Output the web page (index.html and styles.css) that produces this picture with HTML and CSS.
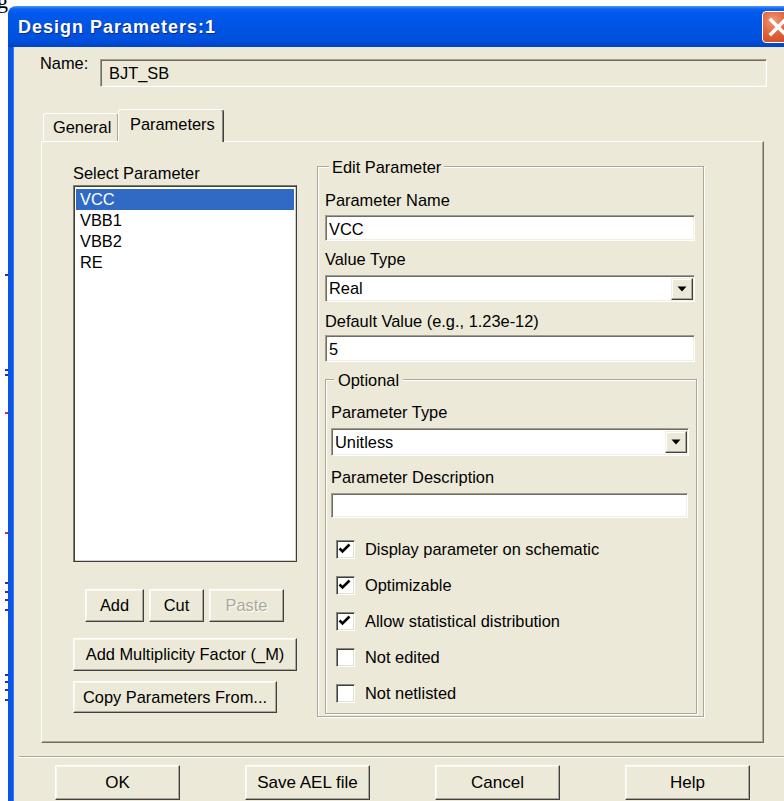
FILE: index.html
```html
<!DOCTYPE html>
<html lang="en">
<head>
<meta charset="utf-8">
<title>Design Parameters:1</title>
<link rel="stylesheet" href="styles.css">
</head>
<body>
<div class="desk">
  <span class="doc-glyph">g</span>
  <span class="doc-tick tick-a"></span>
  <span class="doc-tick tick-b"></span>
  <span class="doc-tick tick-c"></span>
  <span class="doc-tick tick-pink tick-d"></span>
  <span class="doc-tick tick-pink tick-e"></span>
  <span class="doc-tick tick-f"></span>
  <span class="doc-tick tick-g"></span>
  <span class="doc-tick tick-h"></span>
  <span class="doc-tick tick-i"></span>
  <span class="doc-tick tick-j"></span>
  <span class="doc-tick tick-k"></span>
  <span class="doc-tick tick-l"></span>
  <span class="doc-tick tick-m"></span>

  <div class="window">
    <div class="titlebar">
      <span class="title">Design Parameters:1</span>
      <button class="close" aria-label="Close">
        <svg width="30" height="30" viewBox="0 0 30 30"><path d="M8 8 L22 22 M22 8 L8 22" stroke="#fff" stroke-width="3.6" stroke-linecap="square" fill="none"/></svg>
      </button>
    </div>

    <div class="client">
      <div class="name-row">
        <span class="name-label">Name:</span>
        <div class="sunken name-field">BJT_SB</div>
      </div>

      <div class="tabs">
        <div class="tab">General</div>
        <div class="tab tab-active">Parameters</div>
      </div>

      <div class="tab-panel">
        <div class="list-col">
          <div class="select-label">Select Parameter</div>
          <ul class="listbox">
            <li class="selected">VCC</li>
            <li>VBB1</li>
            <li>VBB2</li>
            <li>RE</li>
          </ul>
          <div class="list-actions">
            <button class="btn btn-add">Add</button>
            <button class="btn btn-cut">Cut</button>
            <button class="btn btn-paste" disabled>Paste</button>
          </div>
          <button class="btn btn-mult">Add Multiplicity Factor (_M)</button>
          <button class="btn btn-copy">Copy Parameters From...</button>
        </div>

        <div class="group edit-group">
          <span class="legend">Edit Parameter</span>
          <div class="lbl lbl-name">Parameter Name</div>
          <div class="sunken field field-name">VCC</div>
          <div class="lbl lbl-type">Value Type</div>
          <div class="sunken combo combo-type">
            <span class="combo-text">Real</span>
            <span class="combo-arrow"><svg width="10" height="6" viewBox="0 0 10 6"><path d="M0.5 0.5 H9.5 L5 5.5 Z" fill="#000"/></svg></span>
          </div>
          <div class="lbl lbl-default">Default Value (e.g., 1.23e-12)</div>
          <div class="sunken field field-default">5</div>

          <div class="group optional-group">
            <span class="legend legend-opt">Optional</span>
            <div class="lbl lbl-ptype">Parameter Type</div>
            <div class="sunken combo combo-ptype">
              <span class="combo-text">Unitless</span>
              <span class="combo-arrow"><svg width="10" height="6" viewBox="0 0 10 6"><path d="M0.5 0.5 H9.5 L5 5.5 Z" fill="#000"/></svg></span>
            </div>
            <div class="lbl lbl-desc">Parameter Description</div>
            <div class="sunken field field-desc"></div>

            <ul class="checks">
              <li class="check-row"><span class="box"><svg width="17" height="17" viewBox="0 0 17 17"><path d="M2.5 7.5 L5.5 10.5 L12.5 3.5" stroke="#000" stroke-width="2.6" fill="none"/></svg></span><span class="check-text">Display parameter on schematic</span></li>
              <li class="check-row"><span class="box"><svg width="17" height="17" viewBox="0 0 17 17"><path d="M2.5 7.5 L5.5 10.5 L12.5 3.5" stroke="#000" stroke-width="2.6" fill="none"/></svg></span><span class="check-text">Optimizable</span></li>
              <li class="check-row"><span class="box"><svg width="17" height="17" viewBox="0 0 17 17"><path d="M2.5 7.5 L5.5 10.5 L12.5 3.5" stroke="#000" stroke-width="2.6" fill="none"/></svg></span><span class="check-text">Allow statistical distribution</span></li>
              <li class="check-row"><span class="box"></span><span class="check-text">Not edited</span></li>
              <li class="check-row"><span class="box"></span><span class="check-text">Not netlisted</span></li>
            </ul>
          </div>
        </div>
      </div>

      <div class="separator"></div>

      <div class="footer">
        <button class="btn btn-foot">OK</button>
        <button class="btn btn-foot">Save AEL file</button>
        <button class="btn btn-foot">Cancel</button>
        <button class="btn btn-foot">Help</button>
      </div>
    </div>
  </div>
</div>
</body>
</html>
```
FILE: styles.css
```css
* { box-sizing: border-box; }

html, body {
  margin: 0;
  width: 784px;
  height: 801px;
  overflow: hidden;
  background: #fff;
}

body {
  font-family: "Liberation Sans", Arial, sans-serif;
  font-size: 16.4px;
  line-height: 19px;
  color: #000;
}

.desk {
  position: relative;
  width: 784px;
  height: 801px;
}

/* bits of the document behind the dialog */
.doc-glyph {
  position: absolute;
  left: -3px;
  top: -16px;
  font-family: "Liberation Serif", serif;
  font-size: 22px;
  line-height: 22px;
}

.doc-tick {
  position: absolute;
  left: 5px;
  width: 3px;
  height: 2px;
  background: #1a2fd6;
}
.tick-pink { background: #d3207f; }
.tick-a { top: 268px; }
.tick-b { top: 363px; }
.tick-c { top: 368px; }
.tick-d { top: 406px; }
.tick-e { top: 526px; }
.tick-f { top: 576px; }
.tick-g { top: 585px; }
.tick-h { top: 593px; }
.tick-i { top: 603px; }
.tick-j { top: 668px; }
.tick-k { top: 675px; }
.tick-l { top: 683px; }
.tick-m { top: 693px; }

/* window frame */
.window {
  position: relative;
  z-index: 1;
  margin: 6px 0 0 8px;
  width: 800px;
}

.titlebar {
  display: flex;
  align-items: center;
  height: 41px;
  padding: 0 4px 0 10px;
  border-radius: 8px 8px 0 0;
  background: linear-gradient(#4a93ff 0, #0d62f0 3px, #0059ec 7px, #0054e3 50%, #0050dc 85%, #0043c6 100%);
}

.title {
  flex: 1;
  color: #fff;
  font-weight: bold;
  font-size: 18px;
  line-height: 22px;
  letter-spacing: 1px;
  text-shadow: 1px 1px 0 #0b2a8e;
}

.close {
  width: 32px;
  height: 32px;
  margin-right: 10px;
  padding: 0;
  display: flex;
  align-items: center;
  justify-content: center;
  border: 1.5px solid #fff;
  border-radius: 4px;
  background: radial-gradient(circle at 35% 30%, #f09a78 0, #e0643a 45%, #c8401a 100%);
}

.client {
  height: 760px;
  padding-top: 12px;
  background: #ece9d8;
  border-left: 5px solid #0a55e2;
  border-right: 5px solid #0a55e2;
  box-shadow: inset 1px 0 0 #3a7af2;
}

/* sunken edit look */
.sunken {
  border: 1px solid;
  border-color: #a19e8f #fff #fff #a19e8f;
  box-shadow: inset 1px 1px 0 #6f6d62, inset -1px -1px 0 #f1efe2;
}

.name-row {
  display: flex;
  align-items: flex-start;
  padding-left: 27px;
}

.name-label {
  width: 60px;
  margin-top: -5px;
}

.name-field {
  width: 667px;
  height: 28px;
  padding: 4px 0 0 8px;
  background: #ece9d8;
}

/* tabs */
.tabs {
  display: flex;
  align-items: flex-end;
  margin-top: 22px;
  padding-left: 30px;
}

.tab {
  width: 75px;
  height: 28px;
  padding: 4px 0 0 9px;
  border: 1px solid;
  border-bottom: none;
  border-color: #fff #aca899 transparent #fff;
  border-radius: 3px 3px 0 0;
  background: #ece9d8;
}

.tab-active {
  position: relative;
  z-index: 1;
  width: 106px;
  height: 33px;
  margin-bottom: -1px;
  padding: 5px 0 0 11px;
  border-right-color: #404040;
  box-shadow: inset -1px 0 0 #8a877a;
}

.tab-panel {
  display: flex;
  align-items: flex-start;
  width: 723px;
  height: 602px;
  margin-left: 28px;
  padding: 22px 0 0 31px;
  border: 1px solid;
  border-color: #fff #6f6d62 #6f6d62 #fff;
  box-shadow: inset -1px -1px 0 #aca899;
}

/* parameter list column */
.list-col {
  width: 224px;
  flex: none;
}

.listbox {
  list-style: none;
  margin: 2px 0 0;
  padding: 3px 2px 2px;
  width: 224px;
  height: 377px;
  background: #fff;
  border: 1px solid;
  border-color: #7f7d70 #3c3c3c #3c3c3c #7f7d70;
  box-shadow: inset 1px 1px 0 #404040, inset -1px -1px 0 #d4d0c8;
}

.listbox li {
  height: 21px;
  line-height: 21px;
  padding-left: 4px;
}

.listbox li.selected {
  background: #316ac5;
  color: #fff;
}

.btn {
  display: block;
  padding: 0;
  font: inherit;
  color: #000;
  background: #ece9d8;
  border: 1px solid;
  border-color: #fff #404040 #404040 #fff;
  box-shadow: inset -1px -1px 0 #aca899, inset 1px 1px 0 #f7f6ef;
}

.btn:disabled {
  color: #aca899;
  text-shadow: 1px 1px 0 #fff;
}

.list-actions {
  display: flex;
  gap: 5px;
  margin-top: 27px;
  padding-left: 12px;
}

.list-actions .btn { height: 33px; }
.btn-add { width: 59px; }
.btn-cut { width: 55px; }
.btn-paste { width: 75px; }

.btn-mult {
  width: 224px;
  height: 33px;
  margin-top: 16px;
}

.btn-copy {
  width: 204px;
  height: 32px;
  margin-top: 10px;
}

/* etched group boxes */
.group {
  border: 1px solid #aca899;
  box-shadow: inset 1px 1px 0 #fff, 1px 1px 0 #fff;
}

.legend {
  display: block;
  width: fit-content;
  margin: -12px 0 0 4px;
  padding: 3px 3px 0;
  background: #ece9d8;
}

.edit-group {
  flex: none;
  width: 387px;
  height: 551px;
  margin: 2px 0 0 20px;
  padding-left: 7px;
}

.lbl { display: block; }

.field {
  height: 26px;
  padding: 4px 0 0 3px;
  background: #fff;
}

.lbl-name { margin-top: 14px; }
.field-name { width: 370px; margin-top: 5px; }
.lbl-type { margin-top: 9px; }
.combo-type { width: 370px; height: 27px; margin-top: 6px; }
.lbl-default { margin-top: 10px; }
.field-default { width: 370px; height: 27px; margin-top: 4px; }

.combo {
  display: flex;
  align-items: center;
  padding-left: 3px;
  background: #fff;
}

.combo-text { flex: 1; }

.combo-arrow {
  display: flex;
  align-items: center;
  justify-content: center;
  width: 22px;
  height: 22px;
  margin-right: 1px;
  background: #ece9d8;
  border: 1px solid;
  border-color: #f1efe2 #404040 #404040 #f1efe2;
  box-shadow: inset -1px -1px 0 #aca899, inset 1px 1px 0 #fff;
}

.optional-group {
  width: 372px;
  height: 335px;
  margin-top: 17px;
  padding-left: 5px;
}

.legend-opt {
  margin-left: 3px;
  padding: 3px 4px 0;
}

.lbl-ptype { margin-top: 13px; }
.combo-ptype { width: 358px; height: 28px; margin-top: 6px; }
.lbl-desc { margin-top: 12px; }
.field-desc { width: 357px; height: 25px; margin-top: 6px; }

/* check boxes */
.checks {
  list-style: none;
  margin: 13px 0 0;
  padding: 0;
}

.check-row {
  display: flex;
  align-items: center;
  height: 36px;
  padding-left: 5px;
}

.box {
  flex: none;
  width: 19px;
  height: 19px;
  border: 1px solid;
  border-color: #8a877a #fff #fff #8a877a;
  box-shadow: inset 1px 1px 0 #404040, inset -1px -1px 0 #e3e0d2;
  background: #fff;
}

.box svg { display: block; }

.check-text { margin-left: 10px; }

/* bottom buttons */
.separator {
  height: 2px;
  margin: 13px 0 0 6px;
  border-top: 1px solid #aca899;
  border-bottom: 1px solid #fff;
}

.footer {
  display: flex;
  gap: 65px;
  margin-top: 7px;
  padding-left: 42px;
}

.btn-foot {
  width: 125px;
  height: 35px;
  font-size: 17px;
}
```
